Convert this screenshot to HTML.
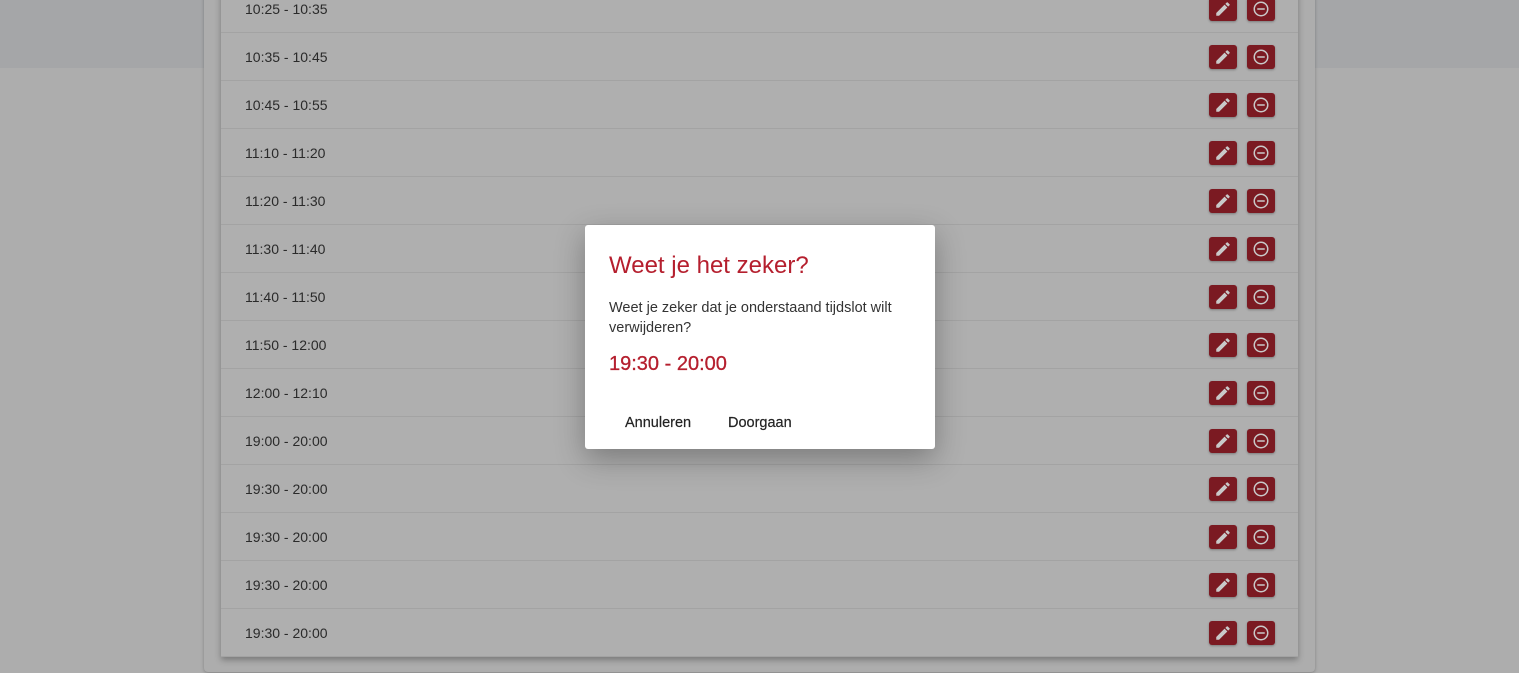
<!DOCTYPE html>
<html><head><style>
*{margin:0;padding:0;box-sizing:border-box}
body{width:1519px;height:673px;overflow:hidden;background:#adadad;font-family:"Liberation Sans",sans-serif;position:relative}
.band{position:absolute;left:0;top:0;width:1519px;height:68px;background:#a5a6a8}
.outer{position:absolute;left:204px;top:-10px;width:1111px;height:682px;background:#adadad;border-radius:4px;box-shadow:0 1px 3px rgba(0,0,0,.25)}
.list{position:absolute;left:221px;top:-15px;width:1077px;height:672px;background:#afafaf;box-shadow:0 3px 6px rgba(0,0,0,.3)}
.row{position:absolute;left:0;width:1077px;height:48px;border-bottom:1px solid #a3a3a3}
.row span{position:absolute;left:24px;top:16px;font-size:14px;color:#2a2a2a}
.b{position:absolute;top:12px;width:28px;height:24px;background:#7b1a22;border-radius:3px;box-shadow:0 1px 2px rgba(0,0,0,.3)}
.b svg{position:absolute;left:5px;top:3px}
.e{left:988px}.d{left:1026px}
.dlg{position:absolute;left:585px;top:225px;width:350px;height:224px;background:#fff;border-radius:3px;box-shadow:0 10px 30px rgba(0,0,0,.3)}
h1{position:absolute;left:24px;top:27px;font-size:24px;font-weight:normal;color:#b51f2e}
p{position:absolute;left:24px;top:73px;width:300px;font-size:14.5px;line-height:20px;color:#333}
.t{position:absolute;left:24px;top:128px;font-size:20px;color:#b51f2e;-webkit-text-stroke:.3px #b51f2e}
.btn{position:absolute;top:190px;font-size:14.5px;color:#222;-webkit-text-stroke:.2px #222}
</style></head><body>
<div class="band"></div>
<div class="outer"></div>
<div class="list" id="l"></div>
<div class="dlg">
<h1>Weet je het zeker?</h1>
<p>Weet je zeker dat je onderstaand tijdslot wilt verwijderen?</p>
<div class="t">19:30 - 20:00</div>
<div class="btn" style="left:40px">Annuleren</div>
<div class="btn" style="left:143px">Doorgaan</div>
</div>
<script>
var t=["10:25 - 10:35","10:35 - 10:45","10:45 - 10:55","11:10 - 11:20","11:20 - 11:30","11:30 - 11:40","11:40 - 11:50","11:50 - 12:00","12:00 - 12:10","19:00 - 20:00","19:30 - 20:00","19:30 - 20:00","19:30 - 20:00","19:30 - 20:00"];
var h="";
var pen='<svg width="18" height="18" viewBox="0 0 24 24"><path fill="#c9c9c9" d="M3 17.25V21h3.75L17.81 9.94l-3.75-3.75L3 17.25zM20.71 7.04a1 1 0 0 0 0-1.41l-2.34-2.34a1 1 0 0 0-1.41 0l-1.83 1.83 3.75 3.75 1.83-1.83z"/></svg>';
var rm='<svg width="18" height="18" viewBox="0 0 24 24"><circle cx="12" cy="12" r="9" fill="none" stroke="#c9c9c9" stroke-width="2"/><rect x="7" y="11" width="10" height="2" fill="#c9c9c9"/></svg>';
t.forEach(function(s,i){h+='<div class="row" style="top:'+(i*48)+'px"><span>'+s+'</span><div class="b e">'+pen+'</div><div class="b d">'+rm+'</div></div>';});
document.getElementById("l").innerHTML=h;
</script>
</body></html>
